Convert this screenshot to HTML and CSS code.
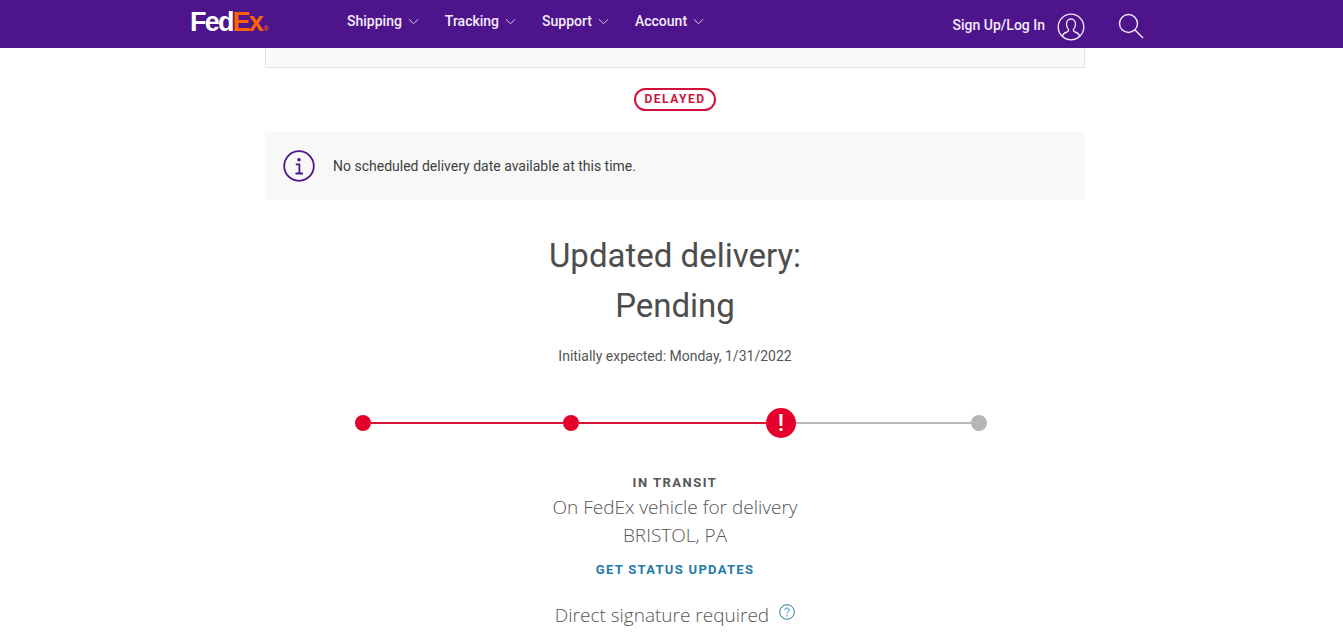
FILE: index.html
```html
<!DOCTYPE html>
<html lang="en">
<head>
<meta charset="utf-8">
<title>FedEx Tracking</title>
<link rel="stylesheet" href="styles.css">
</head>
<body>
<header class="topbar">
  <a class="logo"><span class="logo-fed">Fed</span><span class="logo-ex">Ex</span><span class="logo-reg">®</span></a>
  <nav class="nav">
    <a class="nav-item">Shipping <svg class="chev" viewBox="0 0 12 7"><path d="M1 1l5 5 5-5"/></svg></a>
    <a class="nav-item">Tracking <svg class="chev" viewBox="0 0 12 7"><path d="M1 1l5 5 5-5"/></svg></a>
    <a class="nav-item">Support <svg class="chev" viewBox="0 0 12 7"><path d="M1 1l5 5 5-5"/></svg></a>
    <a class="nav-item">Account <svg class="chev" viewBox="0 0 12 7"><path d="M1 1l5 5 5-5"/></svg></a>
  </nav>
  <a class="login">Sign Up/Log In</a>
  <svg class="user-icon" viewBox="0 0 28 28"><circle cx="14" cy="14" r="12.8"/><path d="M5.5 23.5c.3-3 2-3.800 4.500-4.500 1.500-.5 1.800-1.300 1.500-2.500-1.300-1.500-2-3-2-5.500 0-3 2-5 4.500-5s4.500 2 4.500 5c0 2.500-.7 4-2 5.500-.3 1.200 0 2 1.500 2.500 2.500.7 4.200 1.500 4.500 4.500"/></svg>
  <svg class="search-icon" viewBox="0 0 26 26"><circle cx="10.500" cy="10.500" r="9"/><path d="M17 17l8 8"/></svg>
</header>

<main class="page">
  <div class="top-box"></div>
  <div class="badge-row"><span class="badge">DELAYED</span></div>
  <div class="notice">
    <svg class="info-icon" viewBox="0 0 32 32"><circle cx="16" cy="16" r="14.800"/><circle cx="16" cy="9.700" r="1.800" class="info-fill"/><path d="M12.800 14.300h3.600v9M12.500 23.500h7.500"/></svg>
    <p class="notice-text">No scheduled delivery date available at this time.</p>
  </div>
  <h1 class="headline">Updated delivery:<br>Pending</h1>
  <p class="expected">Initially expected: Monday, 1/31/2022</p>

  <div class="tracker">
    <span class="dot"></span>
    <span class="seg seg-a"></span>
    <span class="dot"></span>
    <span class="seg seg-b"></span>
    <span class="alert">!</span>
    <span class="seg seg-c"></span>
    <span class="dot dot-off"></span>
  </div>

  <p class="status">IN TRANSIT</p>
  <p class="detail">On FedEx vehicle for delivery</p>
  <p class="detail detail-loc">BRISTOL, PA</p>
  <a class="updates">GET STATUS UPDATES</a>
  <div class="signature">
    <span>Direct signature required</span>
    <svg class="help-icon" viewBox="0 0 16 16"><circle cx="8" cy="8" r="7.300"/><path d="M5.800 6.200c0-1.300 1-2.200 2.200-2.200s2.200.9 2.200 2c0 1.700-2.200 1.800-2.200 3.500"/><circle cx="8" cy="11.800" r=".7" class="help-fill"/></svg>
  </div>
</main>
</body>
</html>
```
FILE: styles.css
```css
* { box-sizing: border-box; }
html, body { margin: 0; padding: 0; height: 639px; overflow: hidden; }
body { background: #fff; font-family: Roboto, "Liberation Sans", sans-serif; color: #4d4d4d; }
p, h1 { margin: 0; }

.topbar { height: 48px; background: #4d148c; display: flex; align-items: flex-start; color: #fff; padding-left: 190px; }
.logo { width: 157px; height: 48px; font-family: "Liberation Sans", Arial, sans-serif; font-weight: 700; font-size: 27px; letter-spacing: -1.800px; line-height: 44px; display: block; white-space: nowrap; }
.logo-fed { color: #fff; }
.logo-ex { color: #ff6200; }
.logo-reg { color: #ff6200; font-size: 7px; letter-spacing: 0; margin-left: 1.500px; }
.nav { display: flex; gap: 26px; font-size: 14px; font-weight: 500; line-height: 42px; }
.nav-item { display: flex; align-items: center; gap: 6px; height: 42px; color: #f3ecfa; white-space: nowrap; }
.chev { width: 11px; height: 7px; fill: none; stroke: #e6dcf2; stroke-width: 1; }
.login { margin-left: auto; font-size: 14px; font-weight: 500; line-height: 50px; color: #f3ecfa; white-space: nowrap; }
.user-icon { width: 28px; height: 28px; margin: 13px 0 0 12px; fill: none; stroke: #f3ecfa; stroke-width: 1.300; }
.search-icon { width: 26px; height: 26px; margin: 13px 199px 0 33px; fill: none; stroke: #f3ecfa; stroke-width: 1.400; }

.page { width: 820px; margin-left: 265px; display: flex; flex-direction: column; align-items: center; }
.top-box { width: 100%; height: 20px; background: #fafafa; border: 1px solid #e3e3e3; border-top: 0; }
.badge-row { height: 64px; display: flex; align-items: center; justify-content: center; padding-top: 0; }
.badge { width: 82px; height: 23px; margin-top: -1px; border: 2px solid #d1103c; border-radius: 12px; background: #fff; color: #c8173f; font-size: 12px; font-weight: 700; letter-spacing: 1.500px; line-height: 19px; text-align: center; }
.notice { width: 100%; height: 68px; background: #f8f8f8; border-radius: 3px; display: flex; align-items: center; padding-left: 18px; }
.info-icon { width: 32px; height: 32px; fill: none; stroke: #4d148c; stroke-width: 1.800; }
.info-fill { fill: #4d148c; stroke: none; }
.notice-text { margin-left: 18px; font-size: 14px; line-height: 20px; color: #3f3f3f; }
.headline { margin-top: 31px; font-size: 33px; font-weight: 400; line-height: 50px; text-align: center; color: #4d4d4d; }
.expected { margin-top: 15px; font-size: 14px; line-height: 20px; color: #565656; }

.tracker { width: 640px; margin-top: 41px; margin-left: 0; display: flex; align-items: center; height: 32px; }
.dot { width: 16px; height: 16px; border-radius: 50%; background: #e4002b; flex: none; }
.dot-off { background: #b5b5b5; }
.seg { height: 2px; flex: none; background: #d8143c; }
.seg-a { width: 192px; }
.seg-b { width: 187px; }
.seg-c { width: 175px; background: #b9b9b9; }
.alert { width: 30px; height: 30px; border-radius: 50%; background: #e4002b; color: #fff; flex: none; font-size: 24px; font-weight: 500; line-height: 30px; text-align: center; }

.status { margin-top: 34px; font-size: 13px; font-weight: 700; letter-spacing: 1.500px; line-height: 20px; color: #565656; }
.detail { font-family: "Open Sans", sans-serif; font-weight: 300; font-size: 19px; line-height: 28px; color: #555; }
.detail-loc { margin-top: 0; }
.updates { margin-top: 11px; font-size: 13px; font-weight: 700; letter-spacing: 1.300px; line-height: 20px; color: #1f7ba8; }
.signature { margin-top: 21px; display: flex; align-items: flex-start; gap: 10px; font-family: "Open Sans", sans-serif; font-weight: 300; font-size: 19px; line-height: 28px; color: #555; padding-left: 0; }
.help-icon { width: 16px; height: 16px; margin-top: 3px; fill: none; stroke: #1f7ba8; stroke-width: 1; }
.help-fill { fill: #1f7ba8; stroke: none; }
```
